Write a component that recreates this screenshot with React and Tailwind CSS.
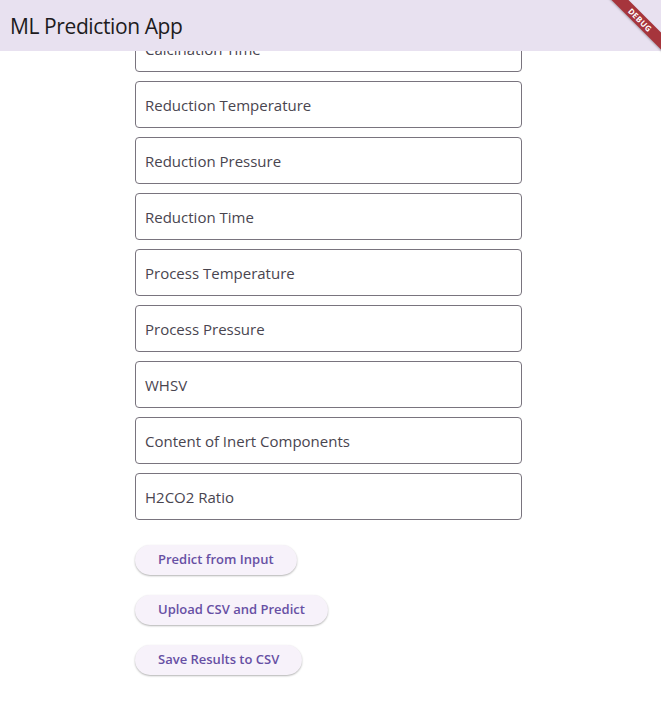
import React from 'react';

const fields = [
  'Calcination Time',
  'Reduction Temperature',
  'Reduction Pressure',
  'Reduction Time',
  'Process Temperature',
  'Process Pressure',
  'WHSV',
  'Content of Inert Components',
  'H2CO2 Ratio',
];

const buttons = ['Predict from Input', 'Upload CSV and Predict', 'Save Results to CSV'];

const App = () => {
  return (
    <div
      className="relative flex h-[720px] w-full flex-col overflow-hidden bg-white"
      style={{ fontFamily: '"Open Sans", "Noto Sans", sans-serif' }}
    >
      <header className="z-10 flex h-[51px] shrink-0 items-center bg-[#e8e1f0] pl-[10px] pt-[1px]">
        <h1 className="text-[21px] font-normal leading-none tracking-[-0.4px] text-[#1d1b20]">ML Prediction App</h1>
      </header>

      <div className="flex-1 overflow-hidden">
        <div className="-mt-[26px] flex flex-col pl-[135px]">
          <div className="flex w-[387px] flex-col gap-[9px]">
            {fields.map((label) => (
              <div
                key={label}
                className="flex h-[47px] items-center rounded-[4px] border border-[#79747e] px-[9px] pt-[1px]"
              >
                <span className="text-[15px] text-[#49454f]">{label}</span>
              </div>
            ))}
          </div>

          <div className="mt-[25px] flex flex-col items-start gap-[20px]">
            {buttons.map((label) => (
              <button
                key={label}
                type="button"
                className="h-[30px] rounded-full bg-[#f7f2fa] px-[23px] text-[13px] font-semibold text-[#6750a4] shadow-[0_1px_2px_rgba(0,0,0,0.3)]"
              >
                {label}
              </button>
            ))}
          </div>
        </div>
      </div>

      {/* debug banner */}
      <div className="pointer-events-none absolute right-0 top-0 z-20 h-[80px] w-[80px] overflow-hidden">
        <div className="absolute right-[-29px] top-[14px] flex h-[12px] w-[100px] rotate-45 items-center justify-center bg-[#a6353c] text-[8px] font-bold tracking-[0.4px] text-white shadow-[0_1px_2px_rgba(0,0,0,0.25)]">
          DEBUG
        </div>
      </div>
    </div>
  );
};

export default App;
